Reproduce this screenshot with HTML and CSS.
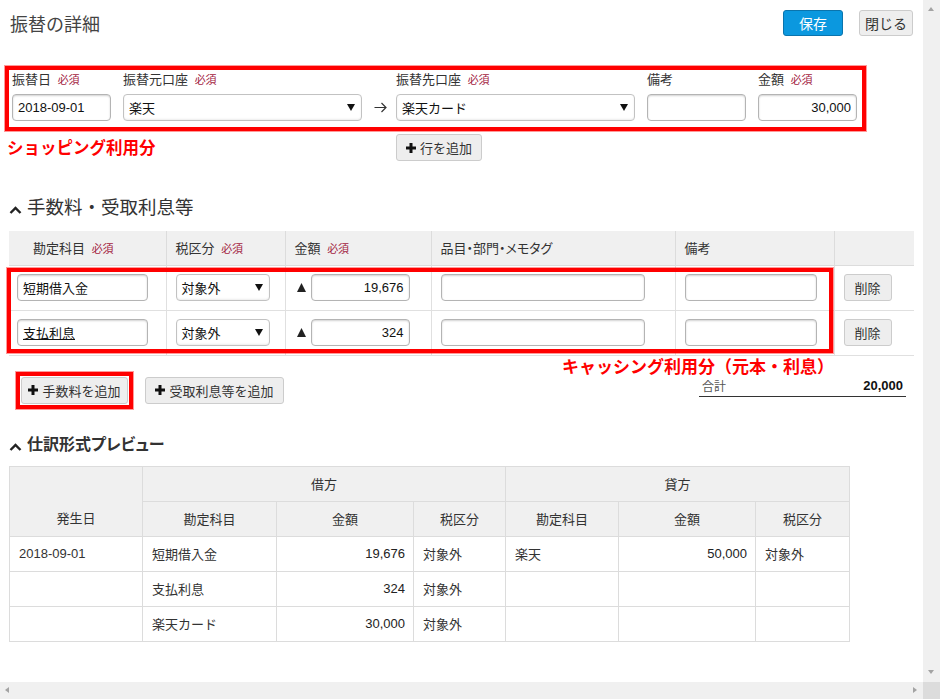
FILE: index.html
```html
<!DOCTYPE html>
<html lang="ja">
<head>
<meta charset="utf-8">
<title>振替の詳細</title>
<link rel="stylesheet" href="styles.css">
</head>
<body>
<div class="frame">
  <main class="viewport">
    <header class="topbar">
      <h1 class="title">振替の詳細</h1>
      <div class="top-actions">
        <button class="btn btn-primary">保存</button>
        <button class="btn btn-close">閉じる</button>
      </div>
    </header>

    <section class="transfer">
      <div class="field f-date">
        <label class="lbl">振替日 <span class="req">必須</span></label>
        <input class="inp" type="text" value="2018-09-01">
      </div>
      <div class="field f-acc">
        <label class="lbl">振替元口座 <span class="req">必須</span></label>
        <div class="sel"><span>楽天</span><svg class="sel-arrow" width="8" height="7" viewBox="0 0 8 7"><path d="M0 0H8L4 7Z" fill="#111"/></svg></div>
      </div>
      <div class="field f-arrow">
        <span class="lbl">&nbsp;</span>
        <svg class="arrow" width="13" height="27" viewBox="0 0 13 27"><path d="M0.5 13.5H12M7.5 9L12 13.5L7.5 18" fill="none" stroke="#333" stroke-width="1.2"/></svg>
      </div>
      <div class="field f-acc">
        <label class="lbl">振替先口座 <span class="req">必須</span></label>
        <div class="sel"><span>楽天カード</span><svg class="sel-arrow" width="8" height="7" viewBox="0 0 8 7"><path d="M0 0H8L4 7Z" fill="#111"/></svg></div>
      </div>
      <div class="field f-small">
        <label class="lbl">備考</label>
        <input class="inp" type="text" value="">
      </div>
      <div class="field f-small">
        <label class="lbl">金額 <span class="req">必須</span></label>
        <input class="inp num" type="text" value="30,000">
      </div>
    </section>

    <div class="shop-row">
      <span class="note">ショッピング利用分</span>
      <button class="btn btn-add"><svg class="plus" width="10" height="10" viewBox="0 0 10 10"><path d="M3.5 0h3v3.5H10v3H6.5V10h-3V6.5H0v-3h3.5z" fill="#111"/></svg>行を追加</button>
    </div>

    <h2 class="sec"><svg class="caret" width="13" height="8" viewBox="0 0 13 8"><polyline points="1.5,7 6.5,2 11.5,7" fill="none" stroke="#222" stroke-width="2.4"/></svg>手数料・受取利息等</h2>

    <div class="fee-wrap">
      <table class="fee">
        <colgroup>
          <col style="width:157px"><col style="width:119px"><col style="width:146px"><col style="width:244px"><col style="width:159px"><col style="width:80px">
        </colgroup>
        <thead>
          <tr>
            <th class="first">勘定科目 <span class="req">必須</span></th>
            <th>税区分 <span class="req">必須</span></th>
            <th>金額 <span class="req">必須</span></th>
            <th class="palt">品目・部門・メモタグ</th>
            <th>備考</th>
            <th></th>
          </tr>
        </thead>
        <tbody>
          <tr>
            <td><input class="inp w-acc" type="text" value="短期借入金"></td>
            <td><div class="sel w-tax"><span>対象外</span><svg class="sel-arrow" width="8" height="7" viewBox="0 0 8 7"><path d="M0 0H8L4 7Z" fill="#111"/></svg></div></td>
            <td><div class="amt"><svg class="tri" width="9" height="9" viewBox="0 0 9 9"><path d="M4.5 0L9 9H0Z" fill="#222"/></svg><input class="inp num w-amt" type="text" value="19,676"></div></td>
            <td><input class="inp w-item" type="text" value=""></td>
            <td><input class="inp w-memo" type="text" value=""></td>
            <td><button class="btn btn-del">削除</button></td>
          </tr>
          <tr>
            <td><input class="inp w-acc ul" type="text" value="支払利息"></td>
            <td><div class="sel w-tax"><span>対象外</span><svg class="sel-arrow" width="8" height="7" viewBox="0 0 8 7"><path d="M0 0H8L4 7Z" fill="#111"/></svg></div></td>
            <td><div class="amt"><svg class="tri" width="9" height="9" viewBox="0 0 9 9"><path d="M4.5 0L9 9H0Z" fill="#222"/></svg><input class="inp num w-amt" type="text" value="324"></div></td>
            <td><input class="inp w-item" type="text" value=""></td>
            <td><input class="inp w-memo" type="text" value=""></td>
            <td><button class="btn btn-del">削除</button></td>
          </tr>
        </tbody>
      </table>
      <div class="mark mark-rows"></div>
      <span class="note note-cash">キャッシング利用分（元本・利息）</span>
    </div>

    <div class="fee-actions">
      <div class="add-btns">
        <div class="mark-btn">
          <button class="btn btn-add btn-fee"><svg class="plus" width="10" height="10" viewBox="0 0 10 10"><path d="M3.5 0h3v3.5H10v3H6.5V10h-3V6.5H0v-3h3.5z" fill="#111"/></svg>手数料を追加</button>
        </div>
        <button class="btn btn-add btn-int"><svg class="plus" width="10" height="10" viewBox="0 0 10 10"><path d="M3.5 0h3v3.5H10v3H6.5V10h-3V6.5H0v-3h3.5z" fill="#111"/></svg>受取利息等を追加</button>
      </div>
      <div class="total">
        <span class="total-lbl">合計</span>
        <span class="total-val">20,000</span>
      </div>
    </div>

    <h2 class="sec sec-bold"><svg class="caret" width="13" height="8" viewBox="0 0 13 8"><polyline points="1.5,7 6.5,2 11.5,7" fill="none" stroke="#222" stroke-width="2.4"/></svg>仕訳形式プレビュー</h2>

    <table class="preview">
      <colgroup>
        <col style="width:133px"><col style="width:134px"><col style="width:137px"><col style="width:92px"><col style="width:113px"><col style="width:137px"><col style="width:94px">
      </colgroup>
      <thead>
        <tr>
          <th rowspan="2" class="date-h">発生日</th>
          <th colspan="3">借方</th>
          <th colspan="3">貸方</th>
        </tr>
        <tr>
          <th>勘定科目</th><th>金額</th><th>税区分</th>
          <th>勘定科目</th><th>金額</th><th>税区分</th>
        </tr>
      </thead>
      <tbody>
        <tr>
          <td>2018-09-01</td><td>短期借入金</td><td class="r">19,676</td><td>対象外</td>
          <td>楽天</td><td class="r">50,000</td><td>対象外</td>
        </tr>
        <tr>
          <td></td><td>支払利息</td><td class="r">324</td><td>対象外</td>
          <td></td><td></td><td></td>
        </tr>
        <tr>
          <td></td><td>楽天カード</td><td class="r">30,000</td><td>対象外</td>
          <td></td><td></td><td></td>
        </tr>
      </tbody>
    </table>
  </main>

  <div class="vscroll">
    <span class="ar ar-up"></span>
    <span class="ar ar-down"></span>
  </div>
  <div class="hscroll">
    <span class="ar ar-left"></span>
    <span class="ar ar-right"></span>
  </div>
  <div class="corner"></div>
</div>
</body>
</html>
```

FILE: styles.css
```css
* { box-sizing: border-box; }

html, body {
  margin: 0;
  padding: 0;
  background: #fff;
}

body {
  font-family: "Liberation Sans", "Noto Sans CJK JP", sans-serif;
  font-size: 13px;
  color: #333;
}

.frame {
  width: 940px;
  height: 699px;
  display: grid;
  grid-template-columns: 923px 17px;
  grid-template-rows: 682px 17px;
  overflow: hidden;
}

.viewport {
  overflow: hidden;
  position: relative;
}

.palt { font-feature-settings: "palt"; }

/* ---------- top bar ---------- */
.topbar {
  display: flex;
  justify-content: space-between;
  align-items: flex-start;
  padding: 10px 10px 0 10px;
  height: 36px;
}

.title {
  margin: 2px 0 0 0;
  font-size: 18px;
  font-weight: normal;
  line-height: 26px;
  color: #444;
}

.top-actions {
  display: flex;
  gap: 16px;
}

.btn {
  font-family: inherit;
  font-size: 13px;
  color: #333;
  background: #eee;
  border: 1px solid #ccc;
  border-radius: 3px;
  height: 27px;
  padding: 0 8px;
  display: inline-flex;
  align-items: center;
  justify-content: center;
  white-space: nowrap;
  cursor: pointer;
}

.btn-primary {
  width: 60px;
  height: 26px;
  background: #0b98df;
  border-color: #0a74ad;
  color: #fff;
  font-size: 14px;
  padding: 0;
}

.btn-close {
  width: 54px;
  height: 26px;
  font-size: 14px;
  padding: 0;
}

/* ---------- transfer box ---------- */
.transfer {
  margin: 30px 0 0 5px;
  width: 861px;
  height: 65px;
  border: 4px solid #f00;
  box-shadow: 0 0 0 1px rgba(255, 0, 0, 0.4);
  padding: 1px 5px 0 3px;
  display: flex;
  gap: 12px;
}

.field {
  display: flex;
  flex-direction: column;
}

.lbl {
  display: block;
  line-height: 18px;
  height: 18px;
  margin-bottom: 5px;
  color: #333;
  white-space: nowrap;
}

.req {
  font-size: 11px;
  color: #a3233f;
  margin-left: 3px;
}

.f-date, .f-small { width: 99px; }
.f-acc { width: 239px; }
.f-arrow { width: 10px; align-items: center; }
.arrow { flex: none; margin-left: 3px; }

.inp {
  font-family: inherit;
  font-size: 13px;
  color: #111;
  height: 27px;
  width: 100%;
  border: 1px solid #b4b4b4;
  border-radius: 4px;
  box-shadow: inset 0 1px 2px rgba(0, 0, 0, 0.18);
  padding: 0 5px;
  background: #fff;
  outline: none;
}

.inp.num { text-align: right; }
.inp.ul { text-decoration: underline; }

.sel {
  position: relative;
  height: 27px;
  width: 100%;
  border: 1px solid #c2c2c2;
  border-radius: 4px;
  box-shadow: inset 0 -1px 2px rgba(0, 0, 0, 0.08);
  background: #fff;
  display: flex;
  align-items: center;
  padding: 0 5px;
  color: #111;
}

.sel-arrow {
  position: absolute;
  right: 6px;
  top: 9px;
}

/* ---------- shopping row ---------- */
.shop-row {
  display: grid;
  grid-template-columns: 389px auto;
  align-items: center;
  padding-left: 7px;
  margin-top: 3px;
  height: 26px;
}

.shop-row .btn-add { justify-self: start; width: 86px; height: 27px; }

.note {
  color: #f00;
  font-weight: bold;
  font-size: 16.5px;
  line-height: 22px;
  white-space: nowrap;
}

.plus { margin-right: 4px; flex: none; }

.btn-add { padding: 0 6px; }

/* ---------- section headings ---------- */
.sec {
  margin: 36px 0 0 0;
  padding-left: 9px;
  display: flex;
  align-items: center;
  font-size: 18.5px;
  font-weight: normal;
  line-height: 24px;
  height: 24px;
  color: #333;
  white-space: nowrap;
}

.caret { margin-right: 5px; position: relative; top: 2px; flex: none; }

.sec-bold {
  margin-top: 25px;
  font-size: 16px;
  font-weight: bold;
  line-height: 22px;
  height: 22px;
  font-feature-settings: "palt";
}

/* ---------- fee table ---------- */
.fee-wrap {
  position: relative;
  margin: 11px 0 0 9px;
  width: 905px;
}

.fee {
  width: 905px;
  border-collapse: collapse;
  table-layout: fixed;
}

.fee th {
  background: #f0f0f0;
  height: 34px;
  text-align: left;
  font-weight: normal;
  padding: 0 9px;
  border-left: 1px solid #dcdcdc;
  border-bottom: 1px solid #dcdcdc;
  white-space: nowrap;
  color: #333;
}

.fee th:first-child { border-left: none; }
.fee th.first { padding-left: 24px; }

.fee td {
  height: 45px;
  padding: 0 8px;
  border-left: 1px solid #e0e0e0;
  border-bottom: 1px solid #e0e0e0;
}

.fee td:first-child { border-left: none; }
.fee td + td { padding-left: 9px; }

.w-acc { width: 131px; }
.w-tax { width: 94px; }
.w-amt { width: 99px; }
.w-item { width: 204px; }
.w-memo { width: 132px; }

.amt {
  display: flex;
  align-items: center;
  gap: 5px;
}

.tri {
  flex: none;
  margin-left: 2px;
}

.btn-del {
  width: 48px;
  height: 27px;
  padding: 0;
}

.mark {
  position: absolute;
  border: 4px solid #f00;
  box-shadow: 0 0 0 1px rgba(255, 0, 0, 0.4);
  pointer-events: none;
}

.mark-rows {
  left: -2px;
  top: 37px;
  width: 826px;
  height: 85px;
}

.note-cash {
  position: absolute;
  left: 553px;
  top: 126px;
  font-size: 17px;
}

/* ---------- fee actions ---------- */
.fee-actions {
  display: flex;
  justify-content: space-between;
  align-items: flex-start;
  margin-top: 16px;
  height: 37px;
}

.add-btns {
  display: flex;
  align-items: center;
  gap: 12px;
  padding-left: 16px;
}

.mark-btn {
  border: 4px solid #f00;
  box-shadow: 0 0 0 1px rgba(255, 0, 0, 0.4);
  padding: 1px;
  display: flex;
}

.btn-fee { width: 107px; height: 27px; }
.btn-int { width: 139px; height: 27px; }

.total {
  width: 207px;
  margin-right: 17px;
  margin-top: 5px;
  display: flex;
  justify-content: space-between;
  align-items: center;
  border-bottom: 1px solid #333;
  height: 20px;
  padding: 0 3px 2px 3px;
}

.total-lbl { font-size: 12px; color: #555; }
.total-val { font-weight: bold; color: #111; font-size: 13px; }

/* ---------- preview table ---------- */
.preview {
  margin: 10px 0 0 9px;
  width: 840px;
  border-collapse: collapse;
  table-layout: fixed;
}

.preview th,
.preview td {
  border: 1px solid #dcdcdc;
  height: 35px;
  padding: 0 9px;
  white-space: nowrap;
}

.preview th {
  background: #f0f0f0;
  font-weight: normal;
  text-align: center;
  color: #333;
}

.preview th.date-h {
  vertical-align: bottom;
  padding-bottom: 9px;
}

.preview td { color: #333; }
.preview td.r { text-align: right; padding-right: 8px; color: #222; }

/* ---------- scrollbars ---------- */
.vscroll, .hscroll {
  background: #f0f0f0;
  position: relative;
}

.corner { background: #dcdcdc; }

.ar {
  position: absolute;
  width: 0;
  height: 0;
  border-style: solid;
}

.ar-up {
  left: 5px;
  top: 7px;
  border-width: 0 3.5px 4px 3.5px;
  border-color: transparent transparent #a3a3a3 transparent;
}

.ar-down {
  left: 5px;
  bottom: 8px;
  border-width: 4px 3.5px 0 3.5px;
  border-color: #a3a3a3 transparent transparent transparent;
}

.ar-left {
  left: 5px;
  top: 5px;
  border-width: 3.5px 4px 3.5px 0;
  border-color: transparent #a3a3a3 transparent transparent;
}

.ar-right {
  right: 6px;
  top: 5px;
  border-width: 3.5px 0 3.5px 4px;
  border-color: transparent transparent transparent #a3a3a3;
}
```
